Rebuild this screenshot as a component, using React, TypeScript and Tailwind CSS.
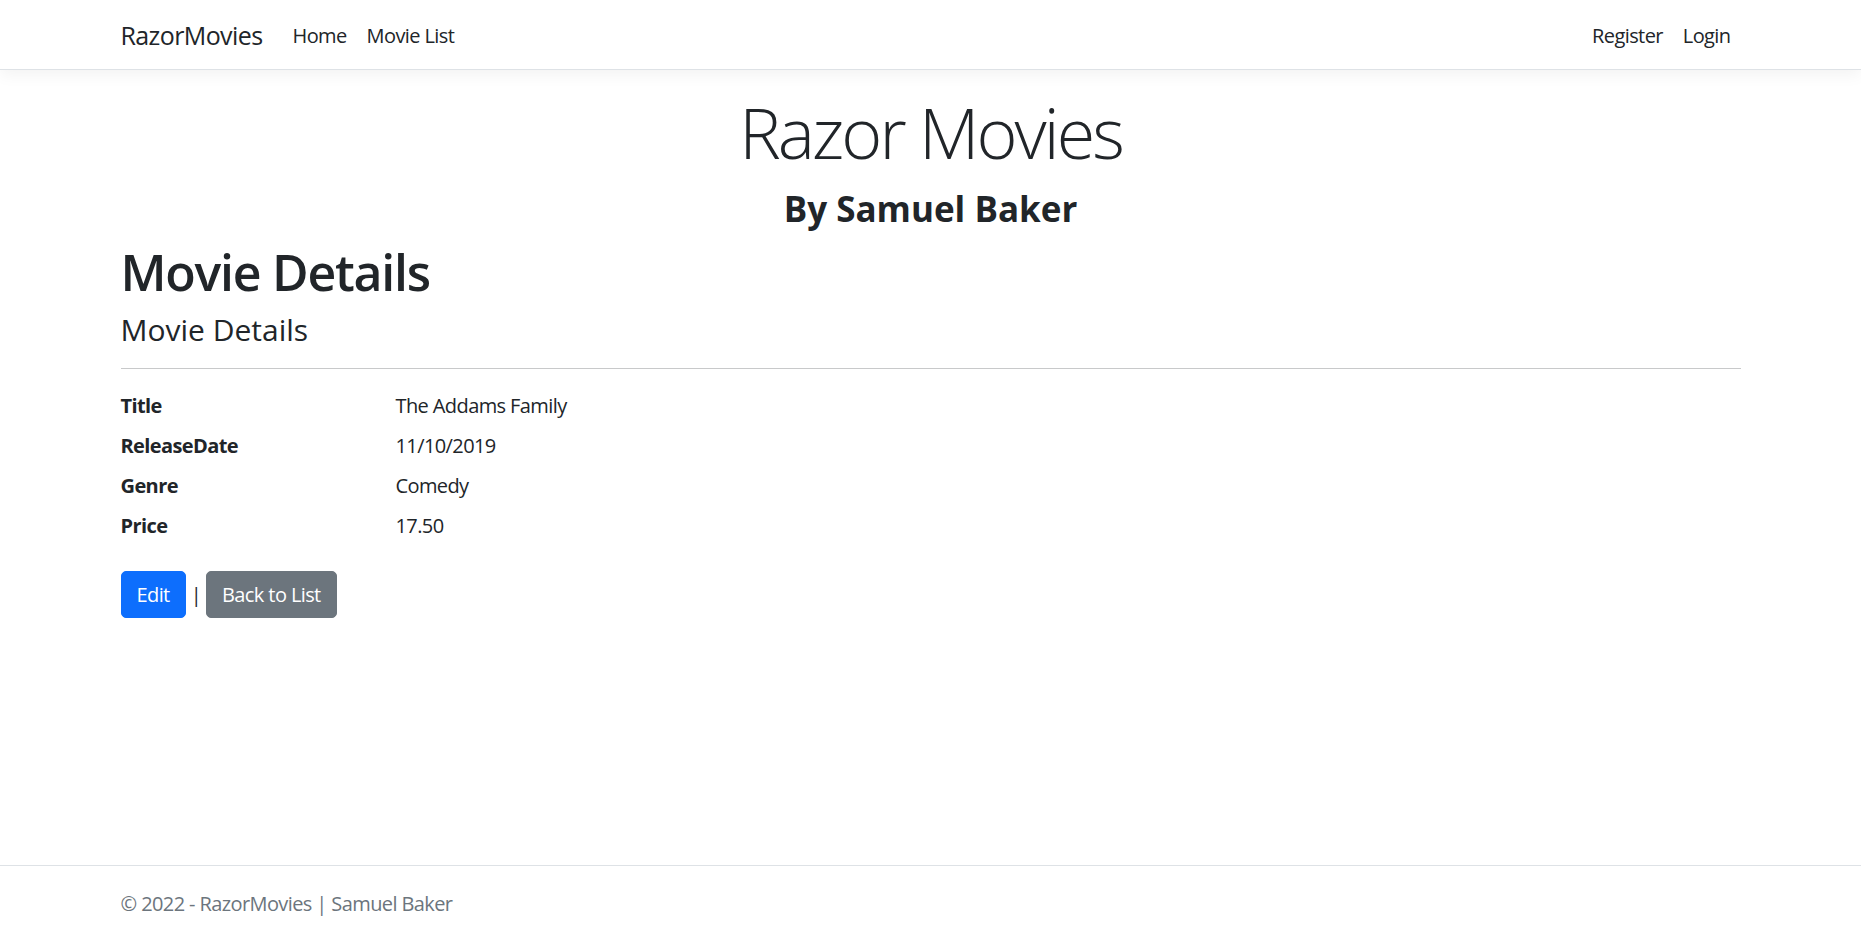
import React from 'react';

const details = [
  { label: 'Title', value: 'The Addams Family' },
  { label: 'ReleaseDate', value: '11/10/2019' },
  { label: 'Genre', value: 'Comedy' },
  { label: 'Price', value: '17.50' },
];

export default function App() {
  return (
    <div
      className="flex min-h-screen flex-col bg-white text-[20px] leading-[30px] tracking-[-0.03em] text-[#212529]"
      style={{ fontFamily: '"Open Sans", "Noto Sans", sans-serif' }}
    >
      {/* navbar */}
      <header className="mb-[20px] border-b border-[#dee2e6] bg-white shadow-[0_5px_15px_rgba(0,0,0,0.05)]">
        <nav className="mx-auto flex h-[69px] w-[1650px] items-center px-[15px] pt-[2px]">
          <a className="mr-[20px] text-[25px] leading-[37px] text-[#212529]" href="#">
            RazorMovies
          </a>
          <div className="flex flex-1 items-center">
            <a className="px-[10px] text-[#212529]" href="#">Home</a>
            <a className="px-[10px] text-[#212529]" href="#">Movie List</a>
          </div>
          <div className="flex items-center">
            <a className="px-[10px] text-[#212529]" href="#">Register</a>
            <a className="px-[10px] text-[#212529]" href="#">Login</a>
          </div>
        </nav>
      </header>

      <main className="mx-auto w-[1650px] px-[15px] pb-[20px]">
        <div className="text-center">
          <h1 className="mb-[14px] text-[70px] font-light leading-[84px] tracking-[-0.042em]">Razor Movies</h1>
          <h3 className="mb-[12px] text-[35px] font-bold leading-[42px] tracking-normal">By Samuel Baker</h3>
        </div>

        <h1 className="mb-[10px] text-[50px] font-semibold leading-[60px] tracking-[-0.025em]">Movie Details</h1>

        <div>
          <h4 className="mb-[10px] text-[30px] font-medium leading-[36px] tracking-normal">Movie Details</h4>
          <hr className="my-[20px] border-t-[1.5px] border-[#c8c9ca]" />
          <dl className="mx-[-15px] mb-[20px] grid grid-cols-[275px_1fr] pt-[2px]">
            {details.map((d) => (
              <React.Fragment key={d.label}>
                <dt className="mb-[10px] px-[15px] font-bold">{d.label}</dt>
                <dd className="mb-[10px] px-[15px]">{d.value}</dd>
              </React.Fragment>
            ))}
          </dl>
        </div>

        <div className="flex items-center gap-[5px]">
          <a
            href="#"
            className="rounded-[5px] border border-[#0d6efd] bg-[#0d6efd] px-[15px] py-[7.5px] text-white"
          >
            Edit
          </a>
          <span>|</span>
          <a
            href="#"
            className="rounded-[5px] border border-[#6c757d] bg-[#6c757d] px-[15px] py-[7.5px] text-white"
          >
            Back to List
          </a>
        </div>
      </main>

      <footer className="mt-auto border-t border-[#dee2e6] text-[#6c757d]">
        <div className="mx-auto w-[1650px] whitespace-nowrap px-[15px] pt-[3px] leading-[70px]">
          &copy; 2022 - RazorMovies | Samuel Baker
        </div>
      </footer>
    </div>
  );
}
